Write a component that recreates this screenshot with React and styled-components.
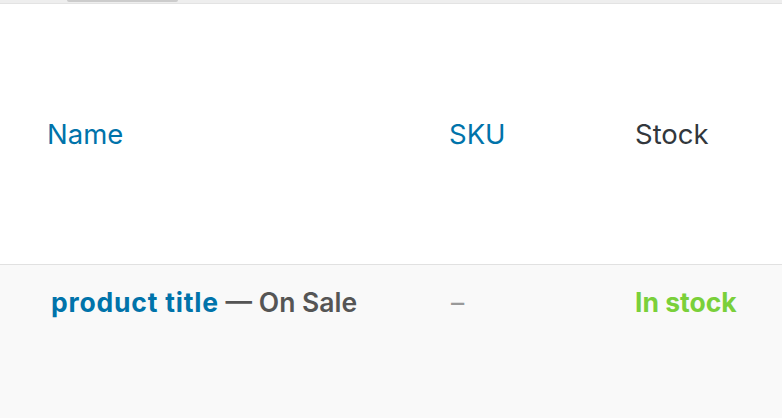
import React from 'react'
import styled, { createGlobalStyle } from 'styled-components'

const GlobalStyle = createGlobalStyle`
    html, body {
        margin: 0;
        padding: 0;
        background: #f9f9f9;
    }
    body {
        font-family: Inter, "Liberation Sans", Arial, sans-serif;
        overflow: hidden;
    }
`

const columns = [
    { label: 'Name', sortable: true },
    { label: 'SKU', sortable: true },
    { label: 'Stock', sortable: false },
]

const App = () => {
    return (
        <>
            <GlobalStyle />
            <Page>
                <TopStrip>
                    <Tab />
                </TopStrip>
                <Table>
                    <HeadRow>
                        {columns.map((col, i) => (
                            <HeadCell key={col.label} sortable={col.sortable} first={i === 0}>
                                {col.label}
                            </HeadCell>
                        ))}
                    </HeadRow>
                    <BodyRow>
                        <Cell first>
                            <ProductLink href="#">product title</ProductLink>
                            <Status> — On Sale</Status>
                        </Cell>
                        <Cell>
                            <Empty>–</Empty>
                        </Cell>
                        <Cell>
                            <InStock>In stock</InStock>
                        </Cell>
                    </BodyRow>
                </Table>
            </Page>
        </>
    )
}

export default App

const Page = styled.div`
    width: 782px;
    height: 418px;
    display: flex;
    flex-direction: column;
    background: #f9f9f9;
`

const TopStrip = styled.div`
    height: 3px;
    background: #eeeeee;
    border-bottom: 1px solid #e3e3e3;
    display: flex;
    align-items: flex-start;
`

const Tab = styled.div`
    width: 111px;
    height: 2px;
    margin-left: 67px;
    background: #cccccc;
    border-radius: 0 0 2px 2px;
`

const Table = styled.div`
    flex: 1;
    display: flex;
    flex-direction: column;
`

const HeadRow = styled.div`
    height: 260px;
    display: grid;
    grid-template-columns: 426px 186px 1fr;
    align-items: center;
    background: #ffffff;
    border-bottom: 1px solid #e1e1e1;
`

const HeadCell = styled.div`
    padding-left: ${props => (props.first ? '47px' : '23px')};
    font-size: 27.5px;
    color: ${props => (props.sortable ? '#0073aa' : '#32373c')};
`

const BodyRow = styled.div`
    flex: 1;
    display: grid;
    grid-template-columns: 426px 186px 1fr;
    align-items: start;
    padding-top: 22px;
    background: #f9f9f9;
`

const Cell = styled.div`
    padding-left: ${props => (props.first ? '47px' : '23px')};
    font-size: 26.5px;
    line-height: 30px;
    font-weight: 700;
    white-space: nowrap;
`

const ProductLink = styled.a`
    margin-left: 4px;
    color: #0073aa;
    text-decoration: none;
    letter-spacing: 0.8px;
`

const Status = styled.span`
    color: #555555;
    font-weight: 600;
`

const Empty = styled.span`
    margin-left: 2px;
    color: #999999;
    font-weight: 400;
`

const InStock = styled.span`
    color: #7ad03a;
`
